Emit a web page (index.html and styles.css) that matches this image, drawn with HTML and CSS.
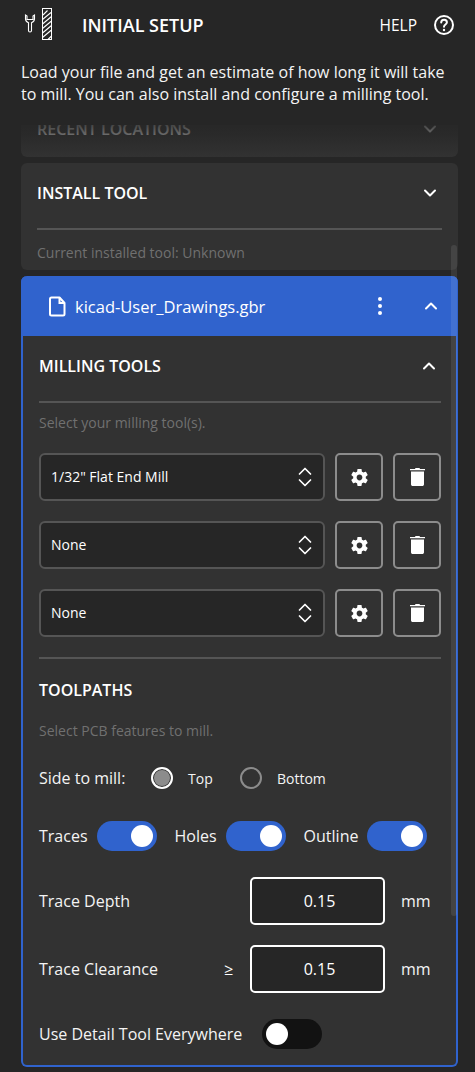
FILE: index.html
```html
<!DOCTYPE html>
<html lang="en">
<head>
    <meta charset="UTF-8">
    <meta name="viewport" content="width=device-width, initial-scale=1.0">
    <title>Initial Setup</title>
    <link rel="stylesheet" href="styles.css">
</head>
<body>
    <svg class="defs" width="0" height="0">
        <symbol id="gear" viewBox="0 0 24 24"><path d="M19.14 12.94c.04-.3.06-.61.06-.94 0-.32-.02-.64-.07-.94l2.03-1.58c.18-.14.23-.41.12-.61l-1.92-3.32c-.12-.22-.37-.29-.59-.22l-2.39.96c-.5-.38-1.03-.7-1.62-.94l-.36-2.54c-.04-.24-.24-.41-.48-.41h-3.84c-.24 0-.43.17-.47.41l-.36 2.54c-.59.24-1.13.57-1.62.94l-2.39-.96c-.22-.08-.47 0-.59.22L2.74 8.87c-.12.21-.08.47.12.61l2.03 1.58c-.05.3-.09.63-.09.94s.02.64.07.94l-2.03 1.58c-.18.14-.23.41-.12.61l1.92 3.32c.12.22.37.29.59.22l2.39-.96c.5.38 1.03.7 1.62.94l.36 2.54c.05.24.24.41.48.41h3.84c.24 0 .44-.17.47-.41l.36-2.54c.59-.24 1.13-.56 1.62-.94l2.39.96c.22.08.47 0 .59-.22l1.92-3.32c.12-.22.07-.47-.12-.61l-2.01-1.58zM12 15.300c-1.800 0-3.300-1.500-3.300-3.300s1.500-3.300 3.300-3.300 3.300 1.500 3.300 3.300-1.500 3.300-3.300 3.300z" fill="#fff"/></symbol>
        <symbol id="trash" viewBox="0 0 15 18"><path d="M5.500 0h4l.5 1h5v1.200H0V1h5zM1 3.500h13v12.700c0 1.100-.7 1.800-1.800 1.800H2.800C1.700 18 1 17.300 1 16.200z" fill="#fff"/></symbol>
        <symbol id="updown" viewBox="0 0 14 22"><path d="M1.500 8 7 2.500 12.500 8M1.500 14 7 19.500 12.500 14" fill="none" stroke="#fff" stroke-width="1.700" stroke-linecap="round" stroke-linejoin="round"/></symbol>
        <symbol id="chev-down" viewBox="0 0 14 10"><path d="M2 2.500 7 7.500 12 2.500" fill="none" stroke="#fff" stroke-width="2" stroke-linecap="round" stroke-linejoin="round"/></symbol>
        <symbol id="chev-up" viewBox="0 0 14 10"><path d="M2 7.500 7 2.500 12 7.500" fill="none" stroke="#fff" stroke-width="2" stroke-linecap="round" stroke-linejoin="round"/></symbol>
    </svg>

    <header class="topbar">
        <svg class="logo" width="36" height="50" viewBox="0 0 36 50" fill="none" stroke="#fff" stroke-width="1">
            <path d="M3.500 15v4c0 1.800 1.200 3 3 3.700v7.800c0 1 .5 1.500 1.500 1.500s1.500-.5 1.500-1.500v-7.800c1.800-.7 3-1.900 3-3.700v-4l-1.500 1v3.500h-6V16z" stroke-width="1.100"/>
            <rect x="20.500" y="8.500" width="9" height="31"/>
            <path d="M21 15l4.500-4.500M20.500 19.500l8.500-7M20.500 24l9-7.500M20.500 28.500l9-7.500M20.500 33l9-7.500M20.500 37.500l9-7.500M26 39.500l3.500-3.500" stroke-width="1.100"/>
        </svg>
        <h1 class="topbar-title">INITIAL SETUP</h1>
        <span class="help-label">HELP</span>
        <svg class="help-icon" width="22" height="22" viewBox="0 0 22 22" fill="none" stroke="#fff" stroke-width="2">
            <circle cx="11" cy="11" r="9"/>
            <path d="M8.200 8.500c0-1.700 1.300-2.800 2.900-2.800s2.800 1 2.800 2.500c0 2.300-2.900 2.200-2.900 4.600" stroke-linecap="round"/>
            <circle cx="11" cy="16" r="1.200" fill="#fff" stroke="none"/>
        </svg>
    </header>

    <p class="intro">Load your file and get an estimate of how long it will take to mill. You can also install and configure a milling tool.</p>

    <main class="scroller">
        <div class="fade"></div>
        <div class="scroll-thumb"></div>

        <section class="card card-recent">
            <div class="card-head">
                <span class="section-title">RECENT LOCATIONS</span>
                <svg class="chev" width="14" height="10"><use href="#chev-down"/></svg>
            </div>
        </section>

        <section class="card card-install">
            <div class="card-head">
                <span class="section-title">INSTALL TOOL</span>
                <svg class="chev" width="14" height="10"><use href="#chev-down"/></svg>
            </div>
            <div class="rule"></div>
            <p class="hint">Current installed tool: Unknown</p>
        </section>

        <section class="file-card">
            <div class="file-head">
                <svg class="file-icon" width="18" height="21" viewBox="0 0 18 21" fill="none" stroke="#fff" stroke-width="2">
                    <path d="M2.500 1.500h8l5 5.500v11c0 1-.5 1.500-1.500 1.500H2.500c-1 0-1.500-.5-1.500-1.500V3c0-1 .5-1.500 1.500-1.500z" stroke-linejoin="round"/>
                    <path d="M10.500 1.500V7h5"/>
                </svg>
                <span class="file-name">kicad-User_Drawings.gbr</span>
                <svg class="kebab" width="6" height="20" viewBox="0 0 6 20" fill="#fff">
                    <circle cx="3" cy="3" r="2"/><circle cx="3" cy="10" r="2"/><circle cx="3" cy="17" r="2"/>
                </svg>
                <svg class="chev" width="14" height="10"><use href="#chev-up"/></svg>
            </div>

            <div class="file-body">
                <div class="milling-head">
                    <span class="section-title">MILLING TOOLS</span>
                    <svg class="chev" width="14" height="10"><use href="#chev-up"/></svg>
                </div>
                <div class="rule"></div>
                <p class="hint hint-tools">Select your milling tool(s).</p>

                <div class="tool-row">
                    <div class="select"><span>1/32" Flat End Mill</span><svg width="14" height="22"><use href="#updown"/></svg></div>
                    <button class="icon-btn"><svg width="21" height="21"><use href="#gear"/></svg></button>
                    <button class="icon-btn"><svg width="15" height="18"><use href="#trash"/></svg></button>
                </div>
                <div class="tool-row">
                    <div class="select"><span>None</span><svg width="14" height="22"><use href="#updown"/></svg></div>
                    <button class="icon-btn"><svg width="21" height="21"><use href="#gear"/></svg></button>
                    <button class="icon-btn"><svg width="15" height="18"><use href="#trash"/></svg></button>
                </div>
                <div class="tool-row">
                    <div class="select"><span>None</span><svg width="14" height="22"><use href="#updown"/></svg></div>
                    <button class="icon-btn"><svg width="21" height="21"><use href="#gear"/></svg></button>
                    <button class="icon-btn"><svg width="15" height="18"><use href="#trash"/></svg></button>
                </div>

                <div class="rule rule-paths"></div>
                <div class="section-title paths-title">TOOLPATHS</div>
                <p class="hint hint-paths">Select PCB features to mill.</p>

                <div class="side-row">
                    <span class="label">Side to mill:</span>
                    <span class="radio radio-on"></span><span class="radio-label radio-top">Top</span>
                    <span class="radio"></span><span class="radio-label">Bottom</span>
                </div>

                <div class="toggle-row">
                    <span class="label">Traces</span><span class="toggle toggle-on"></span>
                    <span class="label">Holes</span><span class="toggle toggle-on"></span>
                    <span class="label">Outline</span><span class="toggle toggle-on"></span>
                </div>

                <div class="field-row">
                    <span class="label field-label">Trace Depth</span>
                    <div class="num-input">0.15</div>
                    <span class="label unit">mm</span>
                </div>
                <div class="field-row">
                    <span class="label field-label">Trace Clearance</span>
                    <span class="gte">≥</span>
                    <div class="num-input">0.15</div>
                    <span class="label unit">mm</span>
                </div>

                <div class="detail-row">
                    <span class="label">Use Detail Tool Everywhere</span>
                    <span class="toggle"></span>
                </div>
            </div>
        </section>
    </main>
</body>
</html>
```

FILE: styles.css
```css
html, body {
    margin: 0;
    padding: 0;
    height: 1072px;
    overflow: hidden;
}
body {
    font-family: "Open Sans", sans-serif;
    background-color: #262626;
    color: #fff;
    font-size: 16px;
}
.defs {
    position: absolute;
}
p, h1 {
    margin: 0;
}

/* Top bar */
.topbar {
    display: flex;
    align-items: center;
    height: 50px;
    padding-left: 22px;
    padding-right: 20px;
}
.logo {
    flex: none;
    margin-right: 24px;
}
.topbar-title {
    font-size: 18px;
    font-weight: 600;
    flex: 1;
}
.help-label {
    font-size: 15.5px;
    margin-right: 16px;
}
.intro {
    padding: 11px 21px 0;
    font-size: 16px;
    line-height: 22px;
    height: 61px;
    box-sizing: border-box;
    color: #f4f4f4;
}

/* Scrolling area */
.scroller {
    position: relative;
    height: 961px;
    overflow: hidden;
    padding: 0 17px 0 21px;
}
.fade {
    position: absolute;
    left: 0;
    right: 0;
    top: 0;
    height: 46px;
    background: linear-gradient(#262626 30%, rgba(38, 38, 38, 0.85) 31%, rgba(38, 38, 38, 0.7) 50%, rgba(38, 38, 38, 0));
    z-index: 2;
}
.scroll-thumb {
    position: absolute;
    left: 451px;
    top: 134px;
    width: 6px;
    height: 671px;
    border-radius: 3px;
    background-color: rgba(255, 255, 255, 0.09);
    z-index: 3;
}
.card {
    background-color: #323232;
    border-radius: 6px;
    margin-bottom: 6px;
}
.card-recent {
    height: 46px;
    padding: 0 16px;
}
.card-recent .card-head {
    height: 36px;
}
.card-install {
    height: 107px;
    overflow: hidden;
    padding: 0 16px;
}
.card-head {
    display: flex;
    align-items: center;
    justify-content: space-between;
    height: 60px;
    padding-right: 5px;
}
.section-title {
    font-size: 16px;
    font-weight: 600;
}
.chev {
    flex: none;
}
.rule {
    height: 2px;
    background-color: #555;
}
.card-install .rule {
    margin-top: 5px;
}
.hint {
    font-size: 14px;
    line-height: 18px;
    color: #707070;
}
.card-install .hint {
    margin-top: 14px;
}

/* File card */
.file-card {
    width: 437px;
    height: 791px;
    box-sizing: border-box;
    border: 2px solid #3063cd;
    border-top: none;
    border-radius: 6px;
    background-color: #323232;
}
.file-head {
    display: flex;
    align-items: center;
    height: 60px;
    margin: 0 -2px;
    padding: 0 20px 0 28px;
    background-color: #3063cd;
    border-radius: 6px 6px 0 0;
}
.file-icon {
    margin-right: 8px;
}
.file-name {
    font-size: 16.5px;
    flex: 1;
}
.kebab {
    margin-right: 41px;
}
.file-body {
    padding: 0 15px 0 16px;
}
.milling-head {
    display: flex;
    align-items: center;
    justify-content: space-between;
    height: 60px;
    padding-right: 5px;
}
.milling-head + .rule {
    margin-top: 5px;
}
.hint-tools {
    margin-top: 11px;
    margin-bottom: 21px;
}
.tool-row {
    display: flex;
    gap: 10px;
    margin-bottom: 20px;
}
.select {
    flex: 1;
    height: 48px;
    box-sizing: border-box;
    display: flex;
    align-items: center;
    justify-content: space-between;
    padding: 0 11px 0 10px;
    background-color: #262626;
    border: 2px solid #555;
    border-radius: 6px;
    font-size: 14px;
}
.select span {
    margin-bottom: 2px;
}
.icon-btn {
    width: 48px;
    height: 48px;
    box-sizing: border-box;
    display: flex;
    align-items: center;
    justify-content: center;
    background: transparent;
    border: 2px solid #8c8c8c;
    border-radius: 5px;
    padding: 0;
}
.paths-title {
    margin-top: 20px;
    line-height: 22px;
}
.hint-paths {
    margin-top: 21px;
}
.label {
    font-size: 16px;
    color: #f4f4f4;
}

/* Radios */
.side-row {
    display: flex;
    align-items: center;
    height: 22px;
    margin-top: 27px;
}
.side-row .label {
    width: 112px;
}
.radio {
    flex: none;
    width: 22px;
    height: 22px;
    box-sizing: border-box;
    border: 2px solid #8c8c8c;
    border-radius: 50%;
}
.radio-on {
    border-color: #fff;
    background-color: #8c8c8c;
    box-shadow: inset 0 0 0 1px #323232;
}
.radio-label {
    font-size: 14px;
    margin-left: 15px;
    color: #f4f4f4;
}
.radio-top {
    width: 52px;
}

/* Toggles */
.toggle-row {
    display: flex;
    align-items: center;
    height: 30px;
    margin-top: 32px;
}
.toggle {
    position: relative;
    flex: none;
    width: 60px;
    height: 30px;
    border-radius: 15px;
    background-color: #121212;
}
.toggle::after {
    content: "";
    position: absolute;
    left: 4px;
    top: 4px;
    width: 22px;
    height: 22px;
    border-radius: 50%;
    background-color: #fff;
}
.toggle-on {
    background-color: #3063cd;
}
.toggle-on::after {
    left: 34px;
}
.toggle-row .toggle {
    margin-left: 9px;
    margin-right: 18px;
}

/* Number fields */
.field-row {
    position: relative;
    display: flex;
    align-items: center;
    height: 48px;
    margin-top: 26px;
}
.field-row + .field-row {
    margin-top: 20px;
}
.field-label {
    width: 211px;
}
.gte {
    position: absolute;
    left: 185px;
    font-size: 16px;
}
.num-input {
    width: 135px;
    height: 48px;
    box-sizing: border-box;
    display: flex;
    align-items: center;
    justify-content: center;
    padding-left: 4px;
    background-color: #262626;
    border: 2px solid #fff;
    border-radius: 5px;
    font-size: 16px;
}
.unit {
    margin-left: 16px;
}
.detail-row {
    display: flex;
    align-items: center;
    height: 30px;
    margin-top: 26px;
    gap: 20px;
}
```
